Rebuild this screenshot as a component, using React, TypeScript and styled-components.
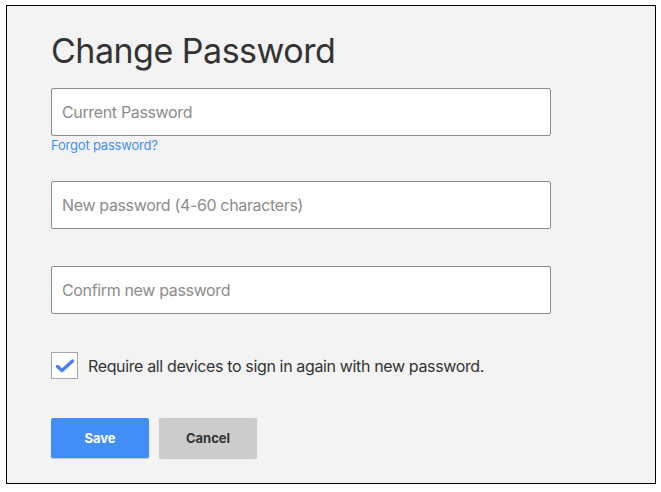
import React from 'react';
import styled, { createGlobalStyle } from 'styled-components';

const Global = createGlobalStyle`
  html, body {
    margin: 0;
    padding: 0;
    background: #fff;
  }
  * {
    box-sizing: border-box;
  }
`;

const Page = styled.div`
  padding: 5px 5px 8px 6px;
`;

const Frame = styled.div`
  width: 650px;
  height: 479px;
  border: 1px solid #000;
  background: #f3f3f3;
  padding: 24px 44px 0;
  font-family: Inter, 'Noto Sans', Arial, sans-serif;
  color: #333;
`;

const Title = styled.h1`
  margin: 0 0 16px;
  font-size: 34px;
  font-weight: 400;
  line-height: 42px;
  letter-spacing: -0.5px;
  color: #333;
`;

const Field = styled.input<{ $gap?: number }>`
  display: block;
  width: 500px;
  height: 48px;
  margin-top: ${(p) => p.$gap ?? 0}px;
  padding: 0 10px;
  border: 1px solid #8c8c8c;
  border-radius: 2px;
  background: #fff;
  font-family: inherit;
  font-size: 16px;
  letter-spacing: -0.35px;
  color: #333;
  &::placeholder {
    color: #8c8c8c;
  }
`;

const Forgot = styled.a`
  display: block;
  margin-top: 1px;
  font-size: 13px;
  line-height: 16px;
  letter-spacing: -0.2px;
  color: #448ef6;
  text-decoration: none;
`;

const CheckRow = styled.label`
  display: flex;
  align-items: center;
  gap: 10px;
  margin-top: 38px;
  font-size: 16px;
  letter-spacing: -0.36px;
  color: #333;
`;

const Box = styled.span`
  display: flex;
  align-items: center;
  justify-content: center;
  width: 27px;
  height: 27px;
  border: 1px solid #a6a6a6;
  background: #fff;
`;

const Actions = styled.div`
  display: flex;
  gap: 10px;
  margin-top: 39px;
`;

const Button = styled.button<{ $primary?: boolean }>`
  width: 98px;
  height: 40px;
  border: none;
  border-radius: 2px;
  font-family: inherit;
  font-size: 13px;
  font-weight: 700;
  background: ${(p) => (p.$primary ? '#418ef7' : '#cccccc')};
  color: ${(p) => (p.$primary ? '#fff' : '#333')};
  box-shadow: 0 1px 1px rgba(0, 0, 0, 0.2);
  cursor: pointer;
`;

export default function App() {
  return (
    <Page>
      <Global />
      <Frame>
        <Title>Change Password</Title>
        <Field type="password" placeholder="Current Password" />
        <Forgot href="#">Forgot password?</Forgot>
        <Field type="password" placeholder="New password (4-60 characters)" $gap={28} />
        <Field type="password" placeholder="Confirm new password" $gap={37} />
        <CheckRow>
          <Box>
            <svg width="20" height="16" viewBox="0 0 20 16">
              <path
                d="M2.5 8.5 L7 12.5 L17.5 3"
                fill="none"
                stroke="#4a7ff0"
                strokeWidth="3.4"
                strokeLinecap="round"
                strokeLinejoin="round"
              />
            </svg>
          </Box>
          Require all devices to sign in again with new password.
        </CheckRow>
        <Actions>
          <Button $primary>Save</Button>
          <Button>Cancel</Button>
        </Actions>
      </Frame>
    </Page>
  );
}
